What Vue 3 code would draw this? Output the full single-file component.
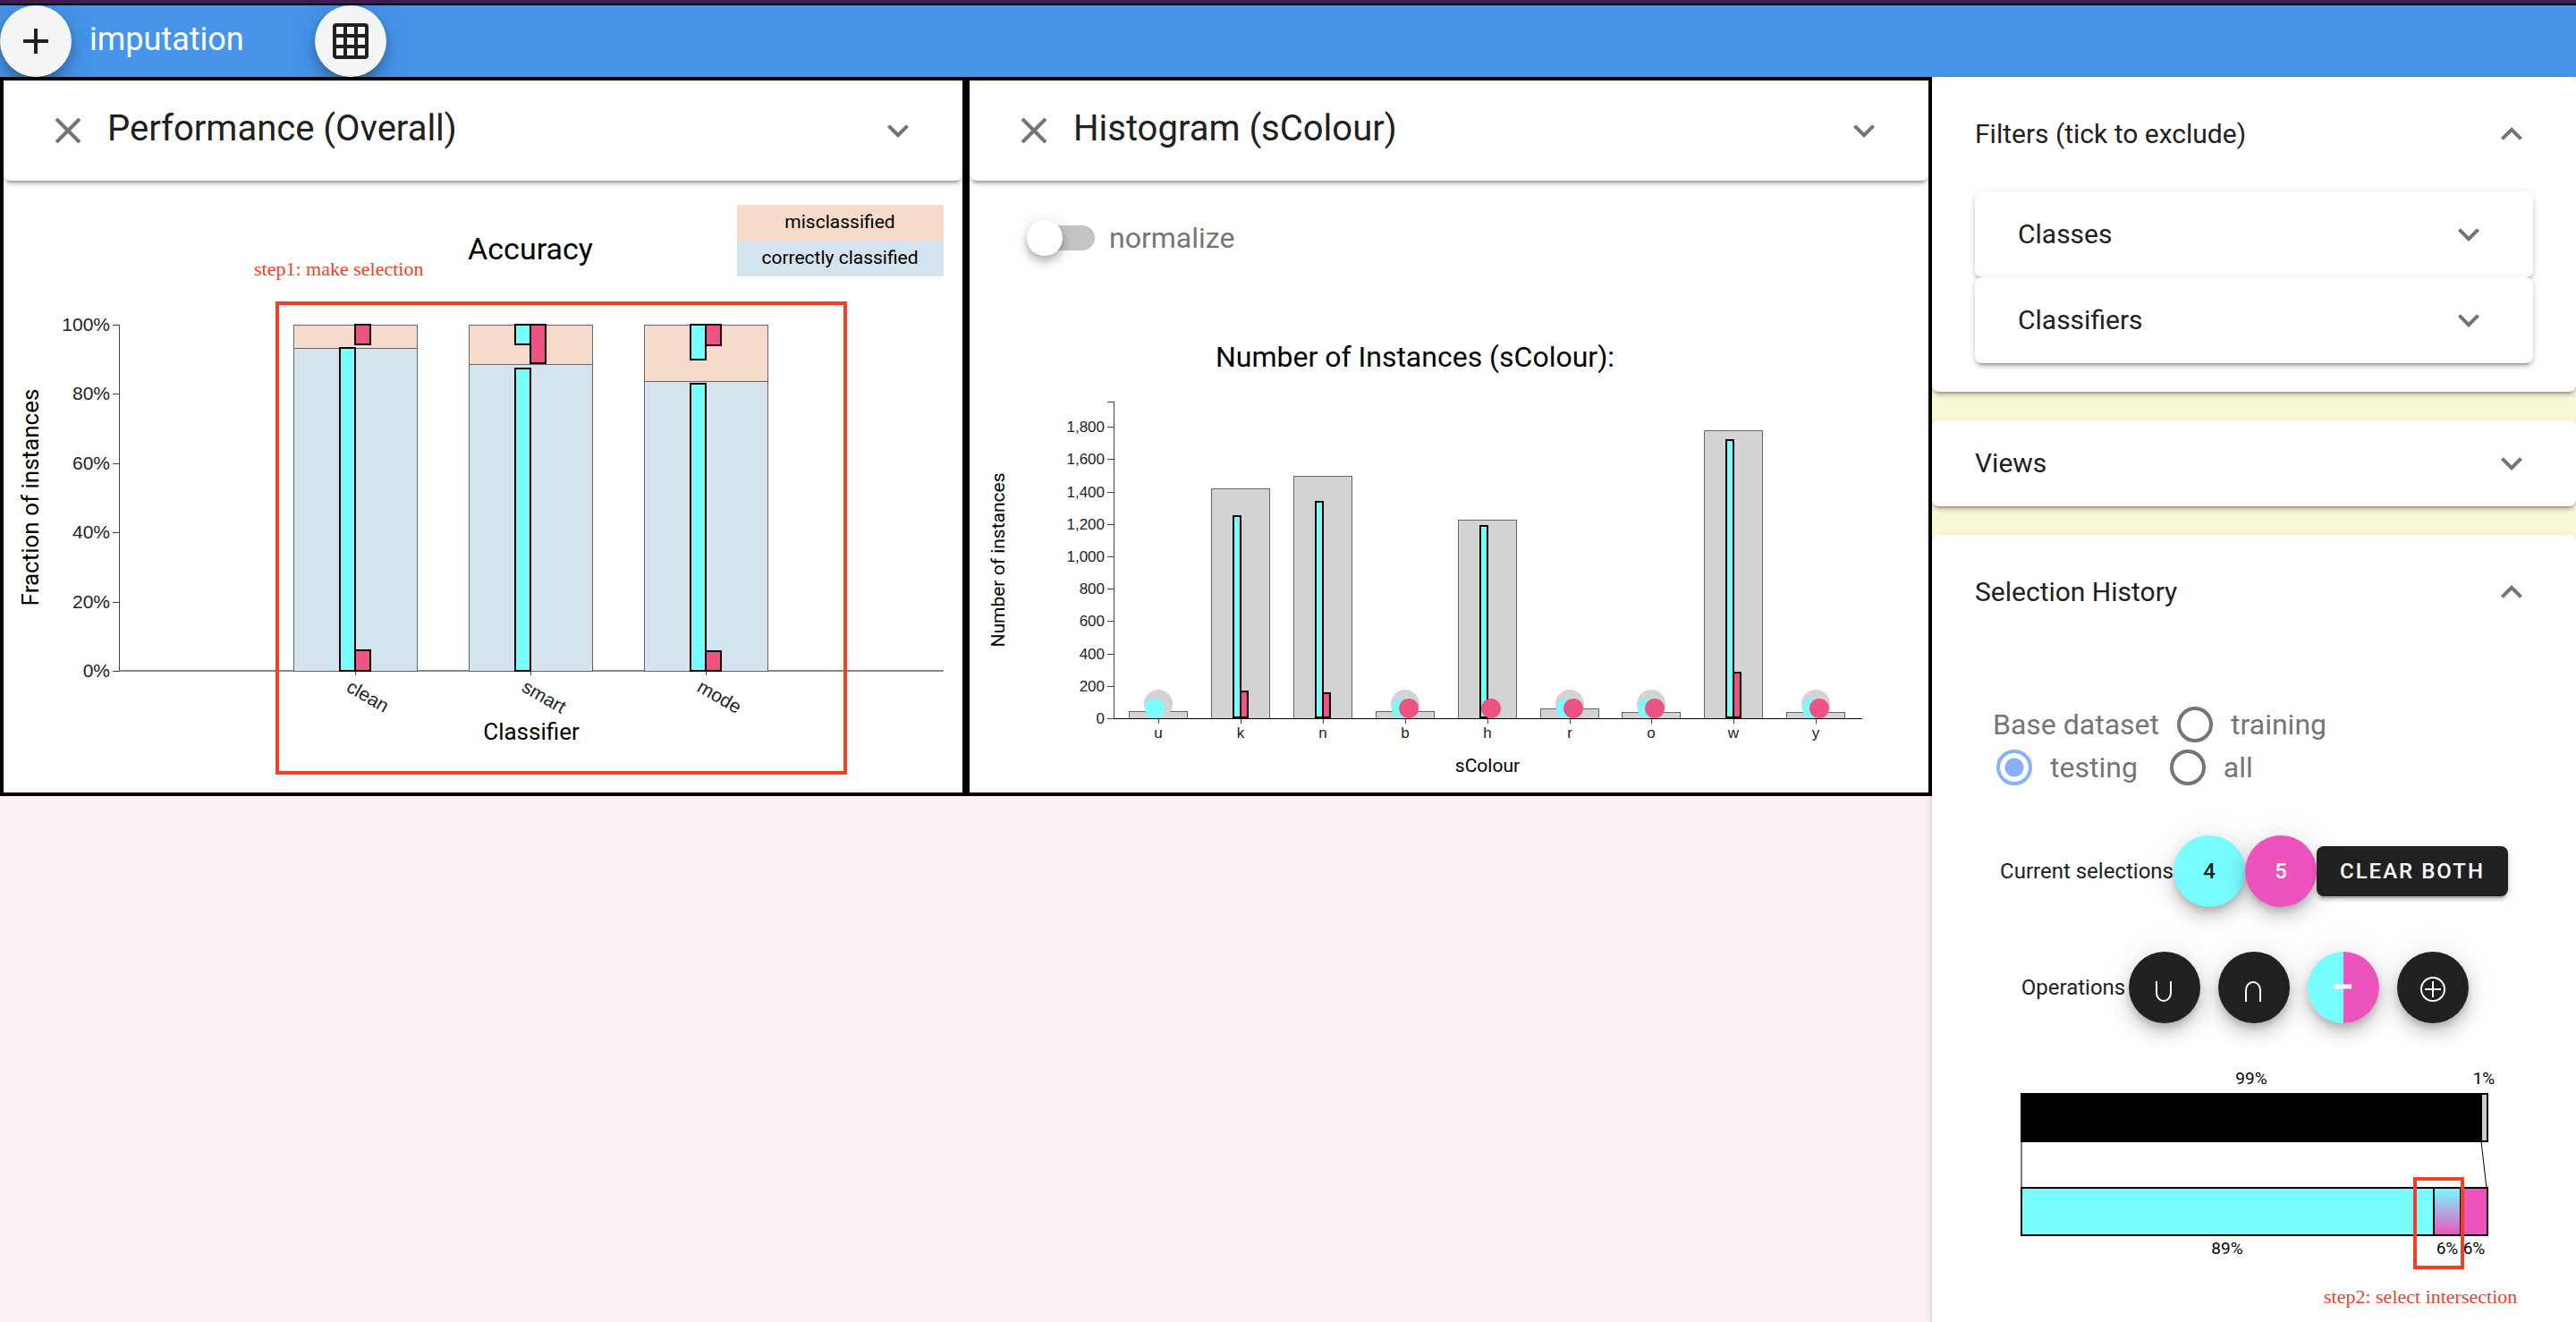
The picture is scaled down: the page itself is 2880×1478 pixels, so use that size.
<script setup>
import { ref } from 'vue'

const base = ref('testing')
const normalize = ref(false)
const datasets = ['training', 'testing', 'all']

/* Accuracy chart: fractions of instances per classifier */
const FLOOR = 750
const PLOT = 387
const percentTicks = [0, 20, 40, 60, 80, 100]
const pctY = (f) => Math.round(FLOOR - PLOT * f)
const classifiers = [
  { name: 'clean', cx: 397, ok: 0.932, okA: 0.932, okB: 0.06, badA: 0, badB: 0.057 },
  { name: 'smart', cx: 593, ok: 0.887, okA: 0.873, okB: 0, badA: 0.058, badB: 0.112 },
  { name: 'mode', cx: 789, ok: 0.836, okA: 0.83, okB: 0.056, badA: 0.101, badB: 0.06 },
]
const overlays = classifiers.flatMap((c) => [
  { x: c.cx - 17, y: pctY(c.okA), bottom: FLOOR, kind: 'sel-a' },
  { x: c.cx, y: pctY(c.okB), bottom: FLOOR, kind: 'sel-b' },
  { x: c.cx - 17, y: pctY(1), bottom: pctY(1 - c.badA), kind: 'sel-a' },
  { x: c.cx, y: pctY(1), bottom: pctY(1 - c.badB), kind: 'sel-b' },
]).filter((r) => r.bottom - r.y > 1)

/* Histogram: instances per sColour value */
const ZERO = 803
const countY = (n) => Math.round(ZERO - n * 0.181)
const countTicks = [0, 200, 400, 600, 800, 1000, 1200, 1400, 1600, 1800]
const bins = [
  { name: 'u', total: 44, a: 6, b: 0, dot: true, dotA: true },
  { name: 'k', total: 1418, a: 1250, b: 168 },
  { name: 'n', total: 1496, a: 1338, b: 156 },
  { name: 'b', total: 44, a: 6, b: 6, dot: true, dotA: true, dotB: true },
  { name: 'h', total: 1225, a: 1187, b: 6, dotB: true },
  { name: 'r', total: 62, a: 6, b: 6, dot: true, dotA: true, dotB: true },
  { name: 'o', total: 38, a: 6, b: 6, dot: true, dotA: true, dotB: true },
  { name: 'w', total: 1778, a: 1718, b: 281 },
  { name: 'y', total: 38, a: 6, b: 6, dot: true, dotA: true, dotB: true },
].map((b, i) => ({ ...b, cx: Math.round(1295 + i * 91.9) }))
</script>

<template>
  <div class="app">
    <div class="strip"></div>
    <header class="bar">
      <button class="fab light" type="button" aria-label="Add">
        <svg class="icon" viewBox="0 0 24 24"><path d="M19,13H13V19H11V13H5V11H11V5H13V11H19V13Z" /></svg>
      </button>
      <h1 class="brand">imputation</h1>
      <button class="fab light" type="button" aria-label="Grid">
        <svg class="icon" viewBox="0 0 24 24"><path d="M10,4V8H14V4H10M16,4V8H20V4H16M16,10V14H20V10H16M16,16V20H20V16H16M14,20V16H10V20H14M8,20V16H4V20H8M8,14V10H4V14H8M8,8V4H4V8H8M10,14H14V10H10V14M4,2H20A2,2 0 0,1 22,4V20A2,2 0 0,1 20,22H4C2.92,22 2,21.1 2,20V4A2,2 0 0,1 4,2Z" /></svg>
      </button>
    </header>

    <div class="body">
      <main class="workspace">
        <section class="panel">
          <div class="panel-head">
            <button class="plain" type="button" aria-label="Close">
              <svg class="icon grey" viewBox="0 0 24 24"><path class="cross" d="M5.5 5.5L18.5 18.5M18.5 5.5L5.5 18.5" /></svg>
            </button>
            <h2>Performance (Overall)</h2>
            <button class="plain" type="button" aria-label="Expand">
              <svg class="icon grey" viewBox="0 0 24 24"><path d="M7.41,8.58L12,13.17L16.59,8.58L18,10L12,16L6,10L7.41,8.58Z" /></svg>
            </button>
          </div>
          <svg class="chart" viewBox="4 202 1072 684" role="img" aria-label="Accuracy">
            <rect class="bad" x="824" y="229" width="231" height="40" />
            <rect class="ok" x="824" y="269" width="231" height="40" />
            <text class="t21 mid" x="939" y="255">misclassified</text>
            <text class="t21 mid" x="939" y="295">correctly classified</text>
            <text class="t34 mid" x="593" y="290">Accuracy</text>
            <text class="note" x="284" y="308">step1: make selection</text>

            <g class="crisp">
              <line class="axis soft" x1="133" :y1="FLOOR" x2="1055" :y2="FLOOR" />
              <line class="axis" x1="133" y1="363" x2="133" :y2="FLOOR" />
              <line v-for="t in percentTicks" :key="t" class="axis" x1="126" x2="133" :y1="pctY(t / 100)" :y2="pctY(t / 100)" />
              <template v-for="c in classifiers" :key="c.name">
                <rect class="bad edge" :x="c.cx - 69" y="363" width="138" :height="pctY(c.ok) - 363" />
                <rect class="ok edge" :x="c.cx - 69" :y="pctY(c.ok)" width="138" :height="FLOOR - pctY(c.ok)" />
                <line class="axis" :x1="c.cx" :x2="c.cx" :y1="FLOOR" y2="755" />
              </template>
              <rect v-for="(r, i) in overlays" :key="i" :class="['sel', r.kind]" :x="r.x" :y="r.y" width="17" :height="r.bottom - r.y" />
            </g>
            <text v-for="t in percentTicks" :key="t" class="tick t21 end" x="123" :y="pctY(t / 100) + 7">{{ t }}%</text>
            <text
              v-for="c in classifiers" :key="c.name" class="tick t21" :x="c.cx - 11" y="772"
              :transform="`rotate(30 ${c.cx - 11} 772)`"
            >{{ c.name }}</text>
            <text class="t26 mid" x="594" y="827">Classifier</text>
            <text class="t26 mid" x="43" y="556" transform="rotate(-90 43 556)">Fraction of instances</text>
            <rect class="mark" x="310" y="339" width="635" height="525" />
          </svg>
        </section>

        <section class="panel">
          <div class="panel-head">
            <button class="plain" type="button" aria-label="Close">
              <svg class="icon grey" viewBox="0 0 24 24"><path class="cross" d="M5.5 5.5L18.5 18.5M18.5 5.5L5.5 18.5" /></svg>
            </button>
            <h2>Histogram (sColour)</h2>
            <button class="plain" type="button" aria-label="Expand">
              <svg class="icon grey" viewBox="0 0 24 24"><path d="M7.41,8.58L12,13.17L16.59,8.58L18,10L12,16L6,10L7.41,8.58Z" /></svg>
            </button>
          </div>
          <label class="toggle"><input v-model="normalize" type="checkbox" class="switch" /><span>normalize</span></label>
          <svg class="chart" viewBox="1084 286 1072 600" role="img" aria-label="Number of instances by sColour">
            <text class="t32 mid" x="1582" y="410">Number of Instances (sColour):</text>
            <g class="crisp">
              <template v-for="b in bins" :key="b.name">
                <rect class="bin edge" :x="b.cx - 33" :y="countY(b.total)" width="65" :height="ZERO - countY(b.total)" />
                <rect class="sel sel-a" :x="b.cx - 8" :y="countY(b.a)" width="8" :height="ZERO - countY(b.a) - 1" />
                <rect v-if="b.b" class="sel sel-b" :x="b.cx" :y="countY(b.b)" width="8" :height="ZERO - countY(b.b) - 1" />
                <line class="axis" :x1="b.cx" :x2="b.cx" :y1="ZERO" y2="809" />
              </template>
              <line class="axis" x1="1245" y1="449" x2="1245" :y2="ZERO" />
              <line class="axis" x1="1238" y1="449" x2="1245" y2="449" />
              <line class="axis dark" x1="1238" :y1="ZERO" x2="2082" :y2="ZERO" />
              <line v-for="t in countTicks" :key="t" class="axis" x1="1238" x2="1245" :y1="countY(t)" :y2="countY(t)" />
            </g>
            <template v-for="b in bins" :key="b.name">
              <circle v-if="b.dot" class="bin" :cx="b.cx" cy="787" r="16" />
              <circle v-if="b.dotA" class="sel-a" :cx="b.cx - 4" cy="792" r="11" />
              <circle v-if="b.dotB" class="sel-b" :cx="b.cx + 4" cy="792" r="11" />
              <text class="tick t17 mid" :x="b.cx" y="825">{{ b.name }}</text>
            </template>
            <text v-for="t in countTicks" :key="t" class="tick t17 end" x="1235" :y="countY(t) + 6">{{ t.toLocaleString('en-US') }}</text>
            <text class="t21 mid" x="1663" y="863">sColour</text>
            <text class="t21 mid" x="1123" y="626" transform="rotate(-90 1123 626)">Number of instances</text>
          </svg>
        </section>
      </main>

      <aside class="side">
        <section class="card">
          <button class="card-head tall" type="button">
            <span>Filters (tick to exclude)</span>
            <svg class="icon grey" viewBox="0 0 24 24"><path d="M7.41,15.41L12,10.83L16.59,15.41L18,14L12,8L6,14L7.41,15.41Z" /></svg>
          </button>
          <div class="nested">
            <section v-for="f in ['Classes', 'Classifiers']" :key="f" class="card">
              <button class="card-head" type="button">
                <span>{{ f }}</span>
                <svg class="icon grey" viewBox="0 0 24 24"><path d="M7.41,8.58L12,13.17L16.59,8.58L18,10L12,16L6,10L7.41,8.58Z" /></svg>
              </button>
            </section>
          </div>
        </section>

        <section class="card">
          <button class="card-head" type="button">
            <span>Views</span>
            <svg class="icon grey" viewBox="0 0 24 24"><path d="M7.41,8.58L12,13.17L16.59,8.58L18,10L12,16L6,10L7.41,8.58Z" /></svg>
          </button>
        </section>

        <section class="card grow">
          <button class="card-head tall" type="button">
            <span>Selection History</span>
            <svg class="icon grey" viewBox="0 0 24 24"><path d="M7.41,15.41L12,10.83L16.59,15.41L18,14L12,8L6,14L7.41,15.41Z" /></svg>
          </button>
          <div class="history">
            <div class="radios" role="radiogroup" aria-labelledby="base-label">
              <span id="base-label">Base dataset</span>
              <label v-for="d in datasets" :key="d"><input v-model="base" type="radio" name="base" :value="d" />{{ d }}</label>
            </div>

            <div class="row">
              <span class="row-name">Current selections</span>
              <button class="fab cyan" type="button">4</button>
              <button class="fab pink" type="button">5</button>
              <button class="clear" type="button">CLEAR BOTH</button>
            </div>

            <div class="row ops">
              <span class="row-name">Operations</span>
              <button class="fab dark" type="button" aria-label="Union">
                <svg class="op" viewBox="0 0 80 80"><path d="M31 33V46A8 9 0 0 0 47 46V33" /></svg>
              </button>
              <button class="fab dark" type="button" aria-label="Intersection">
                <svg class="op" viewBox="0 0 80 80"><path d="M31 56V43A8 9 0 0 1 47 43V56" /></svg>
              </button>
              <button class="fab split" type="button" aria-label="Difference">
                <svg class="op" viewBox="0 0 80 80"><path class="thick" d="M29 39H49" /></svg>
              </button>
              <button class="fab dark" type="button" aria-label="Symmetric difference">
                <svg class="op" viewBox="0 0 80 80"><circle cx="40" cy="42" r="13" /><path d="M40 33V51M31 42H49" /></svg>
              </button>
            </div>

            <svg class="chart" viewBox="2208 1194 624 284" role="img" aria-label="Selection shares">
              <defs>
                <linearGradient id="blend" x1="0" y1="0" x2="0" y2="1">
                  <stop offset="0" stop-color="#77fdfe" /><stop offset="1" stop-color="#ed53bd" />
                </linearGradient>
              </defs>
              <g class="outline">
                <rect x="2260" y="1223" width="514" height="53" fill="#000" />
                <rect x="2774" y="1223" width="7" height="53" fill="#ccc" />
                <rect x="2260" y="1328" width="461" height="53" fill="#77fdfe" />
                <rect x="2721" y="1328" width="30" height="53" fill="url(#blend)" />
                <rect x="2751" y="1328" width="30" height="53" fill="#ed53bd" />
                <line x1="2260" y1="1276" x2="2260" y2="1328" />
                <line x1="2774" y1="1276" x2="2780" y2="1328" />
              </g>
              <text class="t19 mid" x="2517" y="1212">99%</text>
              <text class="t19 mid" x="2777" y="1212">1%</text>
              <text class="t19 mid" x="2490" y="1402">89%</text>
              <text class="t19 mid" x="2736" y="1402">6%</text>
              <text class="t19 mid" x="2766" y="1402">6%</text>
              <rect class="mark" x="2700" y="1318" width="53" height="99" />
              <text class="note" x="2598" y="1457">step2: select intersection</text>
            </svg>
          </div>
        </section>
      </aside>
    </div>
  </div>
</template>

<style>
body { margin: 0; }
</style>

<style scoped>
* { box-sizing: border-box; }
.app {
  min-height: 100vh;
  display: flex;
  flex-direction: column;
  font-family: Roboto, "Liberation Sans", sans-serif;
  font-size: 24px;
  color: #212121;
}
h1, h2 { margin: 0; font-weight: 400; }
button { font: inherit; color: inherit; border: 0; padding: 0; margin: 0; cursor: pointer; }
.strip { height: 6px; background: #3d1f4b; border-bottom: 2px solid #000; }
.bar { display: flex; align-items: center; height: 80px; background: #4695eb; overflow: hidden; }
.brand { width: 272px; padding: 0 0 4px 20px; font-size: 36px; line-height: 48px; color: #fff; }
.icon { display: block; width: 48px; height: 48px; fill: #212121; }
.icon.grey { fill: #757575; }
.cross { fill: none; stroke: #757575; stroke-width: 2; }
.plain { background: none; flex: none; }
.fab {
  flex: none;
  display: flex;
  align-items: center;
  justify-content: center;
  width: 80px;
  height: 80px;
  border-radius: 50%;
  font-weight: 500;
  box-shadow: 0 6px 10px -2px rgba(0,0,0,.2), 0 12px 20px rgba(0,0,0,.14), 0 2px 36px rgba(0,0,0,.12);
}
.fab.light { background: #f5f5f5; }
.fab.cyan { background: #77fdfe; }
.fab.pink { background: #ed53bd; color: #fff; }
.fab.dark { background: #212121; }
.fab.split { background: linear-gradient(to right, #77fdfe 50%, #ed53bd 50%); }
.op { width: 80px; height: 80px; fill: none; stroke: #fff; stroke-width: 2; }
.op .thick { stroke-width: 5; }

.body { flex: 1; display: flex; }
.workspace {
  flex: 3;
  min-width: 0;
  display: grid;
  grid-template-columns: 1fr 1fr;
  align-items: start;
  background: #fdf1f5;
}
.panel { min-width: 0; border: 4px solid #000; background: #fff; }
.panel-head {
  display: flex;
  align-items: center;
  height: 112px;
  padding: 0 48px;
  background: #fff;
  border-radius: 8px;
  box-shadow: 0 6px 2px -4px rgba(0,0,0,.2), 0 4px 4px rgba(0,0,0,.14), 0 2px 10px rgba(0,0,0,.12);
}
.panel-head h2 { flex: 1; padding: 0 0 4px 20px; font-size: 40px; line-height: 48px; }
.toggle {
  display: flex;
  align-items: center;
  width: max-content;
  gap: 16px;
  padding: 44px 0 0 64px;
  font-size: 32px;
  line-height: 40px;
  color: #757575;
}
.switch {
  appearance: none;
  display: flex;
  align-items: center;
  margin: 0;
  width: 76px;
  height: 40px;
}
.switch::before {
  content: "";
  flex: none;
  width: 40px;
  height: 40px;
  border-radius: 50%;
  background: #fff;
  box-shadow: 0 4px 8px -2px rgba(0,0,0,.2), 0 8px 10px rgba(0,0,0,.14), 0 2px 20px rgba(0,0,0,.12);
  z-index: 1;
}
.switch::after { content: ""; flex: none; width: 72px; height: 28px; margin-left: -36px; border-radius: 14px; background: #c4c4c4; }
.chart { display: block; width: 100%; height: auto; fill: #000; }

.side { flex: 1; min-width: 0; display: flex; flex-direction: column; gap: 32px; background: #faf9d7; }
.card {
  background: #fff;
  border-radius: 8px;
  box-shadow: 0 6px 2px -4px rgba(0,0,0,.2), 0 4px 4px rgba(0,0,0,.14), 0 2px 10px rgba(0,0,0,.12);
}
.card.grow { flex: 1; border-radius: 8px 8px 0 0; }
.card-head {
  display: flex;
  align-items: center;
  justify-content: space-between;
  width: 100%;
  height: 96px;
  padding: 0 48px;
  background: none;
  font-size: 30px;
  line-height: 36px;
}
.card-head.tall { height: 128px; }
.nested { padding: 0 48px 32px; }
.history { padding: 60px 48px 0; }
.radios {
  display: flex;
  flex-wrap: wrap;
  column-gap: 16px;
  padding: 0 40px 0 20px;
  font-size: 32px;
  line-height: 48px;
  color: #757575;
}
.radios label { display: flex; align-items: center; gap: 20px; padding: 0 16px 0 4px; }
.radios input {
  appearance: none;
  margin: 0;
  width: 40px;
  height: 40px;
  border: 4px solid #757575;
  border-radius: 50%;
}
.radios input:checked { border-color: #8ab0f9; background: radial-gradient(circle, #8ab0f9 10px, transparent 11px); }
.row { display: flex; align-items: center; justify-content: center; margin-top: 52px; }
.row-name { line-height: 32px; }
.ops { gap: 20px; margin: 50px 0; padding-right: 20px; }
.ops .row-name { margin-right: -16px; }
.clear {
  width: 214px;
  height: 56px;
  border-radius: 8px;
  background: #212121;
  color: #fff;
  font-weight: 500;
  letter-spacing: 2px;
  box-shadow: 0 6px 2px -4px rgba(0,0,0,.2), 0 4px 4px rgba(0,0,0,.14), 0 2px 10px rgba(0,0,0,.12);
}

.crisp { shape-rendering: crispEdges; }
.axis { stroke: #444; stroke-width: 1; }
.axis.soft { stroke: #888; stroke-width: 2; }
.axis.dark { stroke: #000; }
.edge { stroke: #666; stroke-width: 1; }
.outline { stroke: #000; stroke-width: 2; }
.outline line { stroke-width: 1; }
.bad { fill: #f6dbca; }
.ok { fill: #d4e4ee; }
.bin { fill: #d3d3d3; }
.sel { stroke: #000; stroke-width: 2; }
.sel-a { fill: #77fdfe; }
.sel-b { fill: #ec5282; }
.mark { fill: none; stroke: #ee4128; stroke-width: 4; }
.note { font-family: "Liberation Serif", serif; font-size: 22px; fill: #ee4128; }
.tick { font-family: "Liberation Sans", sans-serif; fill: #222; }
.mid { text-anchor: middle; }
.end { text-anchor: end; }
.t17 { font-size: 17px; }
.t19 { font-size: 19px; }
.t21 { font-size: 21px; }
.t26 { font-size: 26px; }
.t32 { font-size: 32px; }
.t34 { font-size: 34px; }
</style>
